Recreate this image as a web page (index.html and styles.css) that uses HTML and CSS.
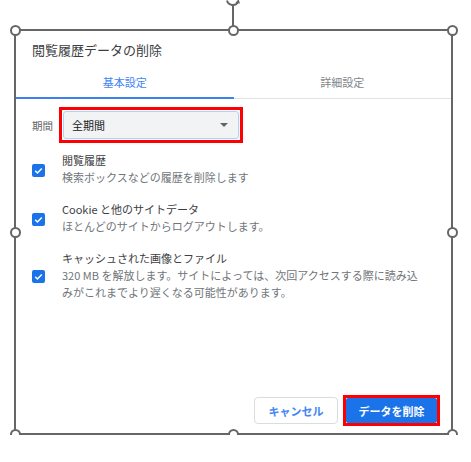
FILE: index.html
```html
<!DOCTYPE html>
<html lang="ja">
<head>
<meta charset="UTF-8">
<meta name="viewport" content="width=device-width, initial-scale=1.0">
<title>閲覧履歴データの削除</title>
<link rel="stylesheet" href="styles.css">
</head>
<body>

<!-- Picture frame with selection handles -->
<div class="frame">

  <!-- Dialog -->
  <div class="dialog">
    <h1 class="title">閲覧履歴データの削除</h1>

    <div class="tabs">
      <div class="tab active">基本設定</div>
      <div class="tab">詳細設定</div>
    </div>

    <div class="period-row">
      <span class="period-label">期間</span>
      <div class="mark">
        <div class="select">
          <span>全期間</span>
          <span class="caret"></span>
        </div>
      </div>
    </div>

    <div class="option">
      <span class="checkbox"><svg width="13" height="13" viewBox="0 0 13 13"><path d="M3.2 6.8l2.2 2.2 4.4-4.6" fill="none" stroke="#fff" stroke-width="1.5"/></svg></span>
      <div class="option-text">
        <div class="option-label">閲覧履歴</div>
        <div class="option-desc">検索ボックスなどの履歴を削除します</div>
      </div>
    </div>

    <div class="option">
      <span class="checkbox"><svg width="13" height="13" viewBox="0 0 13 13"><path d="M3.2 6.8l2.2 2.2 4.4-4.6" fill="none" stroke="#fff" stroke-width="1.5"/></svg></span>
      <div class="option-text">
        <div class="option-label">Cookie と他のサイトデータ</div>
        <div class="option-desc">ほとんどのサイトからログアウトします。</div>
      </div>
    </div>

    <div class="option">
      <span class="checkbox"><svg width="13" height="13" viewBox="0 0 13 13"><path d="M3.2 6.8l2.2 2.2 4.4-4.6" fill="none" stroke="#fff" stroke-width="1.5"/></svg></span>
      <div class="option-text">
        <div class="option-label">キャッシュされた画像とファイル</div>
        <div class="option-desc">320 MB を解放します。サイトによっては、次回アクセスする際に読み込みがこれまでより遅くなる可能性があります。</div>
      </div>
    </div>

    <div class="actions">
      <button class="btn cancel">キャンセル</button>
      <div class="mark">
        <button class="btn primary">データを削除</button>
      </div>
    </div>
  </div>

  <!-- Selection handles -->
  <svg class="rotate" width="20" height="8" viewBox="0 0 20 8"><path d="M4 0.5a6 6 0 0 0 11 1.5" fill="none" stroke="#666" stroke-width="2"/><path d="M15.5 -1l1.5 4.5-4.5-0.5z" fill="#666"/></svg>
  <span class="rotate-stem"></span>
  <span class="handle" style="left:-1px;top:-1px"></span>
  <span class="handle" style="left:217px;top:-1px"></span>
  <span class="handle" style="left:436px;top:-1px"></span>
  <span class="handle" style="left:-1px;top:201px"></span>
  <span class="handle" style="left:436px;top:201px"></span>
  <span class="handle" style="left:-1px;top:403px"></span>
  <span class="handle" style="left:217px;top:403px"></span>
  <span class="handle" style="left:436px;top:403px"></span>
</div>

</body>
</html>
```

FILE: styles.css
```css
body {
  margin: 0;
  padding: 0;
  background: #fff;
  font-family: "Noto Sans CJK JP", "Noto Sans", sans-serif;
  color: #202124;
}
.frame {
  position: relative;
  margin: 29px 0 0 14px;
  width: 435px;
  height: 402px;
  border: 2px solid #666;
}
.dialog {
  display: flex;
  flex-direction: column;
  height: 100%;
  background: #fff;
}
.title {
  margin: 0;
  padding: 9px 16px 0;
  font-size: 13px;
  font-weight: normal;
  line-height: 20px;
  color: #3c4043;
}
.tabs {
  display: flex;
  margin-top: 2px;
  border-bottom: 1px solid #e3e3e3;
}
.tab {
  flex: 1;
  text-align: center;
  font-size: 11px;
  line-height: 20px;
  padding: 10px 0 5px;
  color: #80868b;
  border-bottom: 2px solid transparent;
  margin-bottom: -1px;
}
.tab.active {
  color: #4285f4;
  border-bottom-color: #3b82f0;
}
.period-row {
  display: flex;
  align-items: center;
  margin-top: 8px;
  padding-left: 16px;
}
.period-label {
  font-size: 10.5px;
  color: #5f6368;
  width: 27px;
}
.mark {
  border: 3px solid #f00;
  padding: 1px;
}
.select {
  display: flex;
  align-items: center;
  justify-content: space-between;
  width: 158px;
  height: 26px;
  padding: 0 8px;
  background: #f1f3f4;
  border: 1px solid #b7cff7;
  border-radius: 3px;
  font-size: 11px;
}
.caret {
  width: 0;
  height: 0;
  border-left: 4px solid transparent;
  border-right: 4px solid transparent;
  border-top: 4px solid #5f6368;
  margin-right: 2px;
}
.option {
  display: flex;
  align-items: center;
  margin-top: 15px;
  padding-left: 16px;
}
.period-row + .option {
  margin-top: 9px;
}
.checkbox {
  display: block;
  width: 13px;
  height: 13px;
  border-radius: 2px;
  background: #1a73e8;
  margin-top: 2px;
}
.checkbox svg {
  display: block;
}
.option-text {
  margin-left: 17px;
  width: 360px;
  font-size: 11px;
  line-height: 17px;
}
.option-label {
  color: #3c4043;
}
.option-desc {
  color: #70757a;
}
.actions {
  display: flex;
  align-items: center;
  justify-content: flex-end;
  gap: 5px;
  margin-top: auto;
  padding: 0 11px 7px 0;
}
.btn {
  font-family: "Noto Sans CJK JP", "Noto Sans", sans-serif;
  font-size: 11px;
  font-weight: bold;
  border-radius: 4px;
  cursor: pointer;
}
.cancel {
  width: 84px;
  height: 27px;
  background: #fff;
  color: #4285f4;
  border: 1px solid #dadce0;
}
.primary {
  display: block;
  width: 91px;
  height: 25px;
  background: #1a73e8;
  color: #fff;
  border: none;
  border-radius: 2px;
}
.mark .primary {
  margin: -1px;
}
.handle {
  position: absolute;
  width: 7px;
  height: 7px;
  margin: -5.5px 0 0 -5.5px;
  border: 2px solid #666;
  border-radius: 50%;
  background: #fff;
}
.rotate-stem {
  position: absolute;
  left: 216px;
  top: -26px;
  width: 2px;
  height: 21px;
  background: #666;
}
.rotate {
  position: absolute;
  left: 207px;
  top: -31px;
}
```
